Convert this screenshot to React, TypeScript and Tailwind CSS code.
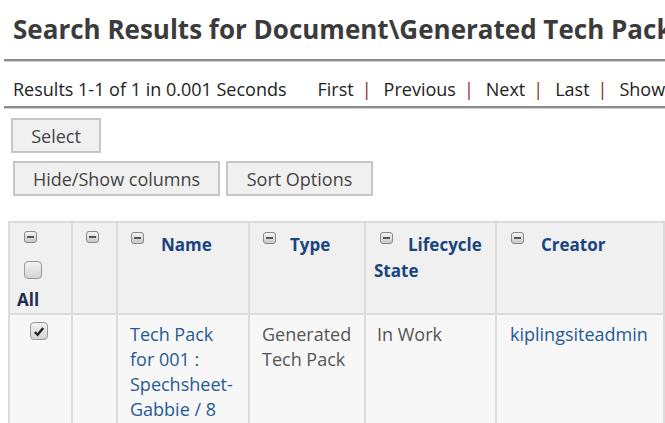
import React from "react";

const MinusIcon = ({ block = false }: { block?: boolean }) => (
  <span className={(block ? "block " : "inline-block align-top ") + "w-[13px] h-[12px] rounded-[3px] border border-[#8a8a8a] bg-gradient-to-b from-[#f4f4f4] to-[#c8c8c8] relative"}>
    <span className="absolute left-[2px] right-[2px] top-[4px] h-[2px] bg-[#555]" />
  </span>
);

const Pipe = () => <span className="ml-[8px] mr-[12px] text-[#8b2a1a]">|</span>;

export default function App() {
  const font = { fontFamily: '"Open Sans", "Noto Sans", sans-serif' };
  return (
    <div className="w-[665px] h-[423px] overflow-hidden bg-white text-[#333]" style={font}>
      <div className="pl-[13px] pt-[12px] h-[59px] whitespace-nowrap text-[26px] font-bold leading-[35px] text-[#3b3b3b]">
        Search Results for Document\Generated Tech Pack
      </div>
      <div className="ml-[4px] h-[3px] bg-[#8c8c8c] border-b border-[#d0d0d0]" />
      <div className="pl-[13px] h-[44px] pt-[15px] flex whitespace-nowrap text-[18px] leading-[24px] text-[#222]">
        <span>Results 1-1 of 1 in 0.001 Seconds</span>
        <span className="ml-[31px]">First</span>
        <Pipe />
        <span>Previous</span>
        <Pipe />
        <span>Next</span>
        <Pipe />
        <span>Last</span>
        <Pipe />
        <span>Show</span>
      </div>
      <div className="ml-[4px] h-[3px] bg-[#8c8c8c] border-b border-[#d0d0d0]" />
      <div className="pl-[11px] pt-[9px]">
        <button className="w-[90px] h-[35px] bg-[#f0f0f0] border-2 border-[#c6c6c6] text-[18px] leading-[24px] text-[#444]">Select</button>
      </div>
      <div className="pl-[13px] pt-[8px] flex gap-[6px]">
        <button className="w-[207px] h-[35px] bg-[#f0f0f0] border-2 border-[#c6c6c6] text-[18px] leading-[24px] text-[#444]">Hide/Show columns</button>
        <button className="w-[147px] h-[35px] bg-[#f0f0f0] border-2 border-[#c6c6c6] text-[18px] leading-[24px] text-[#444]">Sort Options</button>
      </div>
      <div className="pl-[8px] pt-[25px]">
        <table className="border-collapse table-fixed w-[700px] text-[18px]">
          <colgroup>
            <col className="w-[63px]" />
            <col className="w-[45px]" />
            <col className="w-[132px]" />
            <col className="w-[116px]" />
            <col className="w-[131px]" />
            <col className="w-[168px]" />
            <col className="w-[45px]" />
          </colgroup>
          <thead>
            <tr className="bg-[#f0f0f0] h-[92px] align-top">
              <th className="border-2 border-[#dcdcdc] text-left font-bold pt-[8px] pl-[7px] leading-none">
                <div className="pl-[7px] h-[12px]"><MinusIcon block /></div>
                <div className="pl-[7px] mt-[18px] h-[18px]">
                  <span className="block w-[18px] h-[18px] rounded-[4px] border border-[#9a9a9a] bg-gradient-to-b from-[#f2f2f2] to-[#d4d4d4]" />
                </div>
                <div className="text-[#1d2f4f] text-[17px] leading-[22px] mt-[10px] h-[22px]">All</div>
              </th>
              <th className="border-2 border-[#dcdcdc] text-left pt-[8px] pl-[13px] leading-none"><MinusIcon block /></th>
              <th className="border-2 border-[#dcdcdc] text-left pt-[6px] pl-[13px] font-bold text-[17px] text-[#1a4480] leading-[26px]">
                <span className="inline-block mt-[3px] mr-[17px]"><MinusIcon /></span>Name
              </th>
              <th className="border-2 border-[#dcdcdc] text-left pt-[6px] pl-[13px] font-bold text-[17px] text-[#1a4480] leading-[26px]">
                <span className="inline-block mt-[3px] mr-[14px]"><MinusIcon /></span>Type
              </th>
              <th className="border-2 border-[#dcdcdc] text-left pt-[6px] pl-[8px] font-bold text-[17px] text-[#1a4480] leading-[26px]">
                <span className="inline-block mt-[3px] ml-[6px] mr-[15px]"><MinusIcon /></span>Lifecycle State
              </th>
              <th className="border-2 border-[#dcdcdc] text-left pt-[6px] pl-[14px] font-bold text-[17px] text-[#1a4480] leading-[26px]">
                <span className="inline-block mt-[3px] mr-[17px]"><MinusIcon /></span>Creator
              </th>
              <th className="border-2 border-[#dcdcdc]" />
            </tr>
          </thead>
          <tbody>
            <tr className="bg-[#f7f7f7] align-top h-[120px]">
              <td className="border-2 border-[#dcdcdc] pt-[7px] pl-[20px] leading-none">
                <span className="flex items-center justify-center w-[18px] h-[18px] rounded-[4px] border border-[#9a9a9a] bg-gradient-to-b from-[#f2f2f2] to-[#d4d4d4]">
                  <svg width="12" height="11" viewBox="0 0 12 11"><path d="M1.8 6 L4.6 8.8 L10.2 2" fill="none" stroke="#222" strokeWidth="2.4" /></svg>
                </span>
              </td>
              <td className="border-2 border-[#dcdcdc]" />
              <td className="border-2 border-[#dcdcdc] pt-[7px] pl-[12px] pr-[6px] text-[#1f5a96] leading-[25px]">Tech Pack for 001 : Spechsheet-Gabbie / 8</td>
              <td className="border-2 border-[#dcdcdc] pt-[7px] pl-[12px] pr-[4px] text-[#555] leading-[25px]">Generated Tech Pack</td>
              <td className="border-2 border-[#dcdcdc] pt-[7px] pl-[11px] text-[#555] leading-[25px]">In Work</td>
              <td className="border-2 border-[#dcdcdc] pt-[7px] pl-[13px] text-[#1f5a96] leading-[25px] whitespace-nowrap">kiplingsiteadmin</td>
              <td className="border-2 border-[#dcdcdc]" />
            </tr>
          </tbody>
        </table>
      </div>
    </div>
  );
}
